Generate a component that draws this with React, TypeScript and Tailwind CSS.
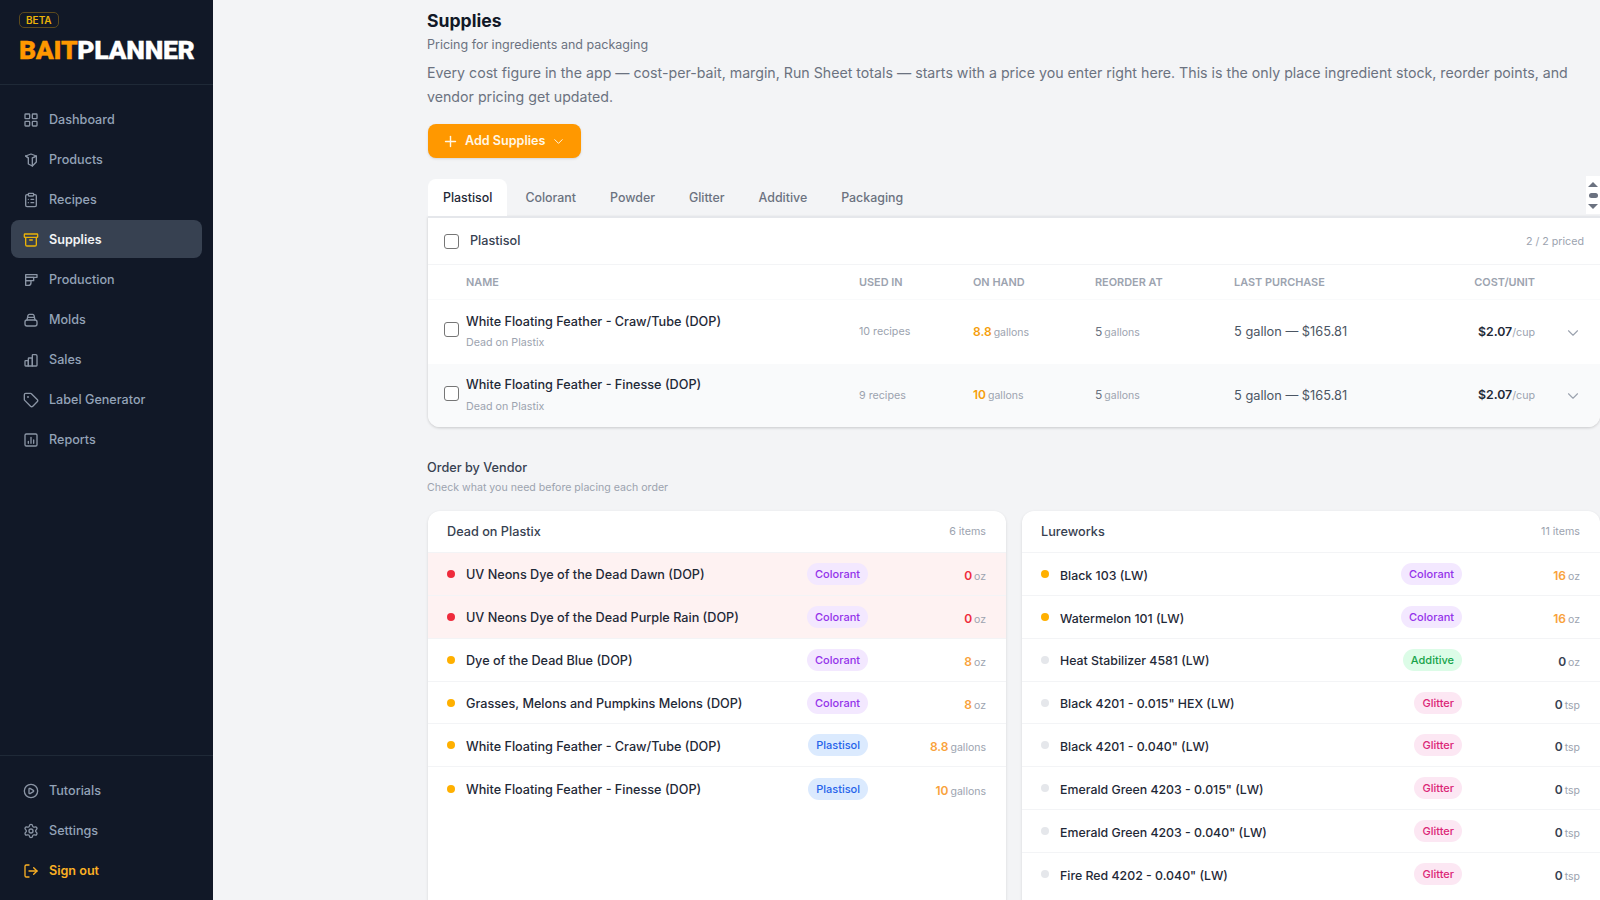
import { Archive, ChevronDown, CirclePlay, ClipboardList, LayoutGrid, LogOut, Plus, Settings, Tag } from "lucide-react";
import type { ReactNode } from "react";

const icon = "h-4 w-4 shrink-0";

function Svg({ children, className = icon }: { children: ReactNode; className?: string }) {
  return (
    <svg viewBox="0 0 24 24" fill="none" stroke="currentColor" strokeWidth="2" strokeLinecap="round" strokeLinejoin="round" className={className}>
      {children}
    </svg>
  );
}

const ProductsIcon = () => (
  <Svg>
    <path d="M4 6l8-3 8 3-6 3v12l-6-3V9z" />
    <path d="M8 9v0L4 6" />
    <path d="M14 9l6-3v9l-6 6" />
  </Svg>
);

const ProductionIcon = () => (
  <Svg>
    <path d="M4 4h17v4H4z" />
    <path d="M4 8h12v5H4z" />
    <path d="M4 13h8v3a4 4 0 0 1-4 4H4z" />
  </Svg>
);

const MoldsIcon = () => (
  <Svg>
    <rect x="3" y="12" width="18" height="9" rx="3" />
    <path d="M6 12l1.500-7a2 2 0 0 1 2-1.500h5a2 2 0 0 1 2 1.500L18 12" />
    <path d="M7 8h10" />
  </Svg>
);

const SalesIcon = () => (
  <Svg>
    <path d="M3 14a1 1 0 0 1 1-1h4v8H4a1 1 0 0 1-1-1z" />
    <path d="M8 10a1 1 0 0 1 1-1h4a1 1 0 0 1 1 1v11H8z" />
    <path d="M14 5a1 1 0 0 1 1-1h4a2 2 0 0 1 2 2v14a1 1 0 0 1-1 1h-6z" />
  </Svg>
);

const ReportsIcon = () => (
  <Svg>
    <rect x="3" y="3" width="18" height="18" rx="2" />
    <path d="M8 17v-3M12 17V8M16 17v-5" />
  </Svg>
);

const mainNav = [
  { label: "Dashboard", icon: <LayoutGrid className={icon} /> },
  { label: "Products", icon: <ProductsIcon /> },
  { label: "Recipes", icon: <ClipboardList className={icon} /> },
  { label: "Supplies", icon: <Archive className={icon} />, active: true },
  { label: "Production", icon: <ProductionIcon /> },
  { label: "Molds", icon: <MoldsIcon /> },
  { label: "Sales", icon: <SalesIcon /> },
  { label: "Label Generator", icon: <Tag className={icon} /> },
  { label: "Reports", icon: <ReportsIcon /> },
];

function NavItem({ label, children, active, gold, top }: { label: string; children: ReactNode; active?: boolean; gold?: boolean; top?: boolean }) {
  return (
    <div
      className={`flex h-[38px] items-center gap-[10.500px] rounded-lg px-[11.500px] text-[12.600px] ${top ? "pt-[2px]" : ""} ${
        active ? "bg-[#374151] font-semibold text-[#f3f4f6]" : gold ? "font-semibold text-[#fbb024]" : "font-medium text-[#94a3b8]"
      }`}
    >
      <span className={active ? "text-[#eab308]" : gold ? "text-[#fbb024]" : "text-[#8b95a5]"}>{children}</span>
      <span className="pt-px">{label}</span>
    </div>
  );
}

function Sidebar() {
  return (
    <aside className="flex h-full w-[213px] shrink-0 flex-col bg-[#111827]">
      <div className="h-[85px] border-b border-[#1f2937] px-[19px] pt-3">
        <span className="block w-fit rounded-[5px] border border-[#5c4a1d] px-[6px] pt-px text-[10px] leading-[13px] font-semibold text-[#eab308]">BETA</span>
        <div className="mt-[8px] font-['Roboto',sans-serif] text-[26.500px] leading-[28px] font-black tracking-[-0.300px] [-webkit-text-stroke:0.3px]">
          <span className="text-[#ff9800]">BAIT</span>
          <span className="text-white">PLANNER</span>
        </div>
      </div>
      <nav className="flex flex-col gap-[2px] px-[11px] pt-[15px]">
        {mainNav.map((n) => (
          <NavItem key={n.label} label={n.label} active={n.active} top>
            {n.icon}
          </NavItem>
        ))}
      </nav>
      <div className="mt-auto flex flex-col gap-[2px] border-t border-[#1f2937] px-[11px] pt-4 pb-[10px]">
        <NavItem label="Tutorials"><CirclePlay className={icon} /></NavItem>
        <NavItem label="Settings"><Settings className={icon} /></NavItem>
        <NavItem label="Sign out" gold><LogOut className={icon} /></NavItem>
      </div>
    </aside>
  );
}

const tabs = ["Plastisol", "Colorant", "Powder", "Glitter", "Additive", "Packaging"];

const supplies = [
  { name: "White Floating Feather - Craw/Tube (DOP)", used: "10 recipes", onHand: "8.8" },
  { name: "White Floating Feather - Finesse (DOP)", used: "9 recipes", onHand: "10" },
];

const gridCols = "grid grid-cols-[22px_393px_114px_122px_139px_1fr_110px_46px] items-center pl-4 pr-[19px]";

function Checkbox() {
  return <span className="block h-[15px] w-[15px] rounded-[3px] border border-[#767676] bg-white" />;
}

function SuppliesTable() {
  return (
    <div className="rounded-b-xl border-t-2 border-[#e5e7eb] bg-white shadow-[0_1px_3px_rgba(0,0,0,0.18)]">
      <div className="flex h-[47px] items-center border-b border-[#f3f4f6] pr-4 pl-4">
        <Checkbox />
        <span className="ml-[11px] pt-px text-[12.650px] font-medium text-[#374151]">Plastisol</span>
        <span className="ml-auto pt-[3px] text-[10.700px] text-[#9ca3af]">2 / 2 priced</span>
      </div>
      <div className={`${gridCols} h-[35px] border-b border-[#f9fafb] pt-px text-[10.900px] font-semibold text-[#9ca3af]`}>
        <span />
        <span>NAME</span>
        <span>USED IN</span>
        <span>ON HAND</span>
        <span>REORDER AT</span>
        <span>LAST PURCHASE</span>
        <span className="text-right">COST/UNIT</span>
        <span />
      </div>
      {supplies.map((s, i) => (
        <div key={s.name} className={`${gridCols} h-[63.500px] ${i === 1 ? "rounded-b-xl bg-[#f9fafb]" : ""}`}>
          <span className="-mt-[4px]">
            <Checkbox />
          </span>
          <div>
            <div className="-mt-px text-[12.650px] leading-[18px] font-medium text-[#1f2937]">{s.name}</div>
            <div className="mt-[5.500px] text-[10.700px] leading-[14px] text-[#9ca3af]">Dead on Plastix</div>
          </div>
          <span className="pt-px text-[10.700px] text-[#9ca3af]">{s.used}</span>
          <span className="text-[10.500px] text-[#9ca3af]">
            <b className="mr-[2px] text-[12px] font-semibold text-[#f59e0b]">{s.onHand}</b>gallons
          </span>
          <span className="text-[10.500px] text-[#9ca3af]">
            <span className="mr-[2px] text-[12px] text-[#6b7280]">5</span>gallons
          </span>
          <span className="text-[12.800px] text-[#4b5563]">5 gallon — $165.81</span>
          <span className="text-right text-[10.700px] text-[#9ca3af]">
            <b className="text-[12.300px] font-semibold text-[#1f2937]">$2.07</b>/cup
          </span>
          <span className="flex justify-end pt-[2px] text-[#9ca3af]">
            <ChevronDown className="-mr-px h-[18px] w-[18px]" strokeWidth={1.500} />
          </span>
        </div>
      ))}
    </div>
  );
}

const badgeStyles: Record<string, string> = {
  Colorant: "bg-[#f3e8ff] text-[#9333ea]",
  Plastisol: "bg-[#dbeafe] text-[#2563eb]",
  Additive: "bg-[#dcfce7] text-[#16a34a]",
  Glitter: "bg-[#fce7f3] text-[#db2777]",
};

type VendorRow = { name: string; kind: string; qty: string; unit: string; level: "out" | "low" | "none" };

const deadOnPlastix: VendorRow[] = [
  { name: "UV Neons Dye of the Dead Dawn (DOP)", kind: "Colorant", qty: "0", unit: "oz", level: "out" },
  { name: "UV Neons Dye of the Dead Purple Rain (DOP)", kind: "Colorant", qty: "0", unit: "oz", level: "out" },
  { name: "Dye of the Dead Blue (DOP)", kind: "Colorant", qty: "8", unit: "oz", level: "low" },
  { name: "Grasses, Melons and Pumpkins Melons (DOP)", kind: "Colorant", qty: "8", unit: "oz", level: "low" },
  { name: "White Floating Feather - Craw/Tube (DOP)", kind: "Plastisol", qty: "8.8", unit: "gallons", level: "low" },
  { name: "White Floating Feather - Finesse (DOP)", kind: "Plastisol", qty: "10", unit: "gallons", level: "low" },
];

const lureworks: VendorRow[] = [
  { name: "Black 103 (LW)", kind: "Colorant", qty: "16", unit: "oz", level: "low" },
  { name: "Watermelon 101 (LW)", kind: "Colorant", qty: "16", unit: "oz", level: "low" },
  { name: "Heat Stabilizer 4581 (LW)", kind: "Additive", qty: "0", unit: "oz", level: "none" },
  { name: 'Black 4201 - 0.015" HEX (LW)', kind: "Glitter", qty: "0", unit: "tsp", level: "none" },
  { name: 'Black 4201 - 0.040" (LW)', kind: "Glitter", qty: "0", unit: "tsp", level: "none" },
  { name: 'Emerald Green 4203 - 0.015" (LW)', kind: "Glitter", qty: "0", unit: "tsp", level: "none" },
  { name: 'Emerald Green 4203 - 0.040" (LW)', kind: "Glitter", qty: "0", unit: "tsp", level: "none" },
  { name: 'Fire Red 4202 - 0.040" (LW)', kind: "Glitter", qty: "0", unit: "tsp", level: "none" },
];

const dotColor = { out: "bg-[#ef2b3c]", low: "bg-[#ffb000]", none: "bg-[#e5e7eb]" };
const qtyColor = { out: "text-[#ef2b3c]", low: "text-[#f9a23b]", none: "text-[#374151]" };

function VendorCard({ title, count, rows, nameSize }: { title: string; count: string; rows: VendorRow[]; nameSize: string }) {
  return (
    <div className="rounded-xl bg-white shadow-[0_1px_3px_rgba(0,0,0,0.12)]">
      <div className="flex h-[42px] items-center border-b border-[#f3f4f6] pr-5 pl-[19px]">
        <span className="text-[12.700px] font-medium text-[#374151]">{title}</span>
        <span className="ml-auto pt-[2px] text-[10.700px] text-[#9ca3af]">{count}</span>
      </div>
      {rows.map((r) => (
        <div key={r.name} className={`flex h-[42.860px] items-center border-b border-[#f3f4f6] pr-5 pl-[19px] last:border-b-0 ${r.level === "out" ? "bg-[#fef2f2]" : ""}`}>
          <span className={`h-2 w-2 shrink-0 rounded-full ${dotColor[r.level]}`} />
          <span className={`ml-[11px] flex-1 pt-[4px] font-medium text-[#1f2937] ${nameSize}`}>{r.name}</span>
          <span className={`rounded-full px-2 py-[2px] pt-[3px] text-[11px] leading-[17px] font-medium ${badgeStyles[r.kind]}`}>{r.kind}</span>
          <span className="w-[118px] pt-[4px] text-right text-[10.500px] text-[#9ca3af]">
            <b className={`mr-[2px] text-[12px] font-semibold ${qtyColor[r.level]}`}>{r.qty}</b>
            {r.unit}
          </span>
        </div>
      ))}
    </div>
  );
}

export default function App() {
  return (
    <div className="flex h-[900px] w-[1600px] overflow-hidden bg-[#f3f4f6] font-['Inter',sans-serif]">
      <Sidebar />
      <main className="min-w-0 flex-1 pl-[214px]">
        <h1 className="pt-[10px] text-[17.600px] leading-[22px] font-bold text-[#111827]">Supplies</h1>
        <p className="mt-[3px] text-[12.500px] leading-[20px] text-[#6b7280]">Pricing for ingredients and packaging</p>
        <p className="mt-[5.500px] text-[14.200px] leading-[24.500px] text-[#6b7280]">
          Every cost figure in the app — cost-per-bait, margin, Run Sheet totals — starts with a price you enter right here. This is the only place ingredient stock, reorder points, and vendor pricing get updated.
        </p>
        <button className="mt-[14.500px] ml-px flex h-[34px] w-[153px] items-center gap-[6px] rounded-lg bg-[#ff9800] pl-[14px] text-[12.600px] font-semibold text-[#fff7e6] shadow-sm">
          <Plus className="h-[17px] w-[17px]" />
          <span className="pt-px">Add Supplies</span>
          <ChevronDown className="h-[15px] w-[15px]" strokeWidth={1.500} />
        </button>
        <div className="mt-[19px] flex h-[39px] items-end gap-[2px]">
          {tabs.map((t, i) => (
            <span
              key={t}
              className={`flex h-[37px] items-center px-4 pt-px text-[12.400px] font-medium ${i === 0 ? "ml-px rounded-t-lg bg-white pl-[15px] pr-[15px] text-[#1f2937]" : "text-[#6b7280]"}`}
            >
              {t}
            </span>
          ))}
          <span className="mb-[2px] ml-auto flex h-[38px] w-[14px] flex-col items-center justify-center gap-[6px] bg-white">
            <span className="h-0 w-0 border-x-[5px] border-b-[5px] border-x-transparent border-b-[#6b7280]" />
            <span className="h-[5px] w-[9px] rounded-full bg-[#6b7280]" />
            <span className="h-0 w-0 border-x-[5px] border-t-[5px] border-x-transparent border-t-[#6b7280]" />
          </span>
        </div>
        <div className="ml-px">
          <SuppliesTable />
        </div>
        <h2 className="mt-[31px] text-[12.700px] leading-[20px] font-medium text-[#374151]">Order by Vendor</h2>
        <p className="text-[10.600px] leading-[20px] text-[#9ca3af]">Check what you need before placing each order</p>
        <div className="mt-[13px] ml-px grid min-h-[500px] grid-cols-2 gap-4">
          <VendorCard title="Dead on Plastix" count="6 items" rows={deadOnPlastix} nameSize="text-[12.650px]" />
          <VendorCard title="Lureworks" count="11 items" rows={lureworks} nameSize="text-[12.350px]" />
        </div>
      </main>
    </div>
  );
}
